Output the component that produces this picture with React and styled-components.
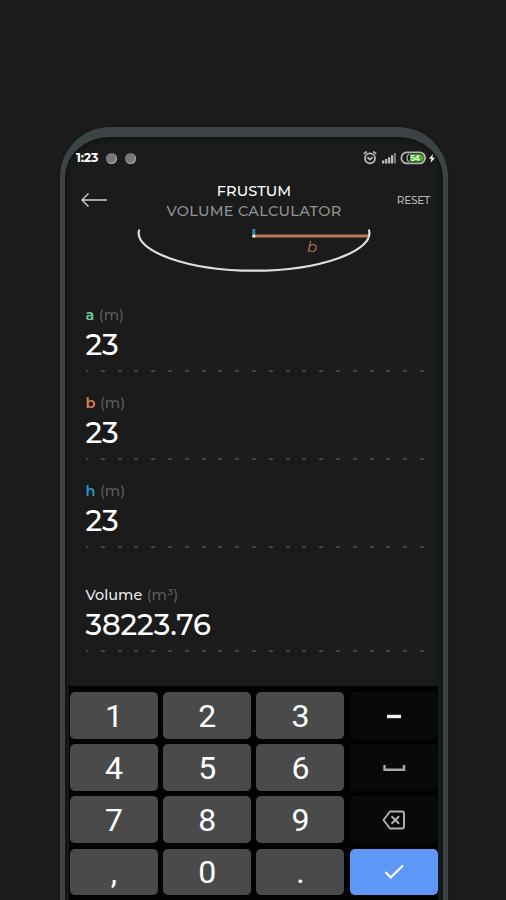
import React from "react";
import styled, { createGlobalStyle } from "styled-components";

const Global = createGlobalStyle`
  * { box-sizing: border-box; }
  html, body { margin: 0; background: #1b1b1b; }
`;
const Page = styled.main`
  width: 506px;
  height: 900px;
  overflow: hidden;
  padding: 127px 0 0 60px;
  background: #1b1b1b;
  font-family: Montserrat, Inter, sans-serif;
  color: #fff;
`;
const Phone = styled.section`
  width: 388px;
  height: 820px;
  border: solid #3b4345;
  border-width: 10px 5px 0 5px;
  border-radius: 50px 50px 0 0;
  background: #1b1b1b;
  box-shadow: inset 0 0 5px 1px #0b1012, 0 0 3px #141616;
  display: flex;
  flex-direction: column;
`;
const StatusBar = styled.div`
  height: 42px;
  padding: 0 6px 0 11px;
  display: flex;
  justify-content: space-between;
  align-items: center;
`;
const StatusGroup = styled.div`
  display: flex;
  align-items: center;
  gap: ${(p) => p.$gap}px;
`;
const Clock = styled.span`
  width: 22px;
  font-size: 12.5px;
  font-weight: 700;
  letter-spacing: -0.2px;
  line-height: 14px;
  padding-bottom: 1px;
  white-space: nowrap;
`;
const Dot = styled.i`
  width: 11px;
  height: 11px;
  border-radius: 50%;
  background: #777;
  box-shadow: inset -1px -1px 1px #a8a8a8;
`;
const Header = styled.header`
  height: 50px;
  padding: 0 13px 9px 16px;
  display: grid;
  grid-template-columns: 47px 1fr 50px;
  align-items: center;
`;
const Titles = styled.div`
  padding-top: 2px;
  text-align: center;
  font-size: 14.5px;
  line-height: 20px;
  white-space: nowrap;
`;
const Title = styled.div`
  font-weight: 500;
  letter-spacing: 0.1px;
`;
const Subtitle = styled.div`
  color: #929292;
  font-weight: 500;
  letter-spacing: 0.28px;
`;
const Reset = styled.span`
  color: #b5b5b5;
  font-size: 10.5px;
  font-weight: 500;
  letter-spacing: -0.25px;
  text-align: right;
`;
const Figure = styled.div`
  height: 48px;
  padding-left: 70px;
`;
const Gap = styled.div`
  height: ${(p) => p.$height}px;
`;
const Field = styled.div`
  height: ${(p) => p.$height || 88}px;
  padding: 0 18px 0 20.5px;
`;
const Label = styled.div`
  font-size: 14.5px;
  line-height: 22px;
  font-weight: ${(p) => p.$weight || 600};
  color: ${(p) => p.$color};
`;
const Unit = styled.span`
  font-weight: 500;
  margin-left: 0.5px;
  color: #5b5b5b;
`;
const Value = styled.div`
  height: 41px;
  font-size: 29px;
  line-height: 37px;
  font-weight: 500;
  letter-spacing: -0.1px;
`;
const Dashes = styled.div`
  height: 2px;
  margin-top: 3px;
  background: repeating-linear-gradient(90deg, #434343 0 2px, transparent 2px 14.8px, #434343 14.8px 16.8px);
`;
const Keypad = styled.div`
  width: 369px;
  height: 230px;
  margin-left: 4px;
  padding: 6px 1px 0;
  background: #020202;
  display: grid;
  grid-template-columns: repeat(4, 88px);
  grid-auto-rows: 46.5px;
  column-gap: 5.2px;
  row-gap: 5.7px;
`;
const Key = styled.button`
  border: 0;
  border-radius: 5px;
  display: flex;
  align-items: center;
  justify-content: center;
  color: #fff;
  font: 400 32px/46px Roboto, sans-serif;
  padding: 1px 0 0;
  background: ${(p) => (p.$kind === "dark" ? "#090909" : p.$kind === "blue" ? "#5e97f6" : "#4a4a4a")};
`;

const fields = [
  { name: "a", color: "#69cf93" },
  { name: "b", color: "#dc805a" },
  { name: "h", color: "#219bd0" },
];

const Minus = () => (
  <svg width="26" height="26" viewBox="0 0 26 26"><path d="M6 13.500H20" stroke="#f0f0f0" strokeWidth="3.400" /></svg>
);
const Space = () => (
  <svg width="26" height="26" viewBox="0 0 26 26"><path d="M3.500 10v4.800h19.500V10" fill="none" stroke="#a8a8a8" strokeWidth="2.400" /></svg>
);
const Delete = () => (
  <svg width="26" height="26" viewBox="0 0 26 26" fill="none" stroke="#b0b0b0" strokeWidth="2">
    <path d="M9 4.500h12q2 0 2 2v13q0 2-2 2H9L2.500 13Z" strokeLinejoin="round" />
    <path d="m10.500 9.200 7.600 7.600m0-7.600-7.600 7.600" />
  </svg>
);
const Check = () => (
  <svg width="26" height="26" viewBox="0 0 26 26"><path d="m4.500 13 5.200 5.500L22 6.500" fill="none" stroke="#fff" strokeWidth="2.200" /></svg>
);

const keys = [
  "1", "2", "3", <Minus />,
  "4", "5", "6", <Space />,
  "7", "8", "9", <Delete />,
  ",", "0", ".", <Check />,
];

export default function App() {
  return (
    <Page>
      <Global />
      <Phone>
        <StatusBar>
          <StatusGroup $gap={8}>
            <Clock>1:23</Clock>
            <Dot />
            <Dot />
          </StatusGroup>
          <StatusGroup $gap={4.5}>
            <svg width="14" height="14" viewBox="0 0 14 14" fill="none" stroke="#b8b8b8" strokeWidth="1.8">
              <circle cx="7" cy="7.300" r="5" />
              <path d="m.8 2.900 3-2.400M13.200 2.900l-3-2.400M4.400 6.300 7 8.500l2.600-2.200" />
            </svg>
            <svg width="14" height="14" viewBox="0 0 14 14">
              <path d="M0 9.500h2.300v3H0zM3 8h2.300v4.500H3zM6 6.300h2.300v6.200H6zM9 4.300h2.300v8.200H9z" fill="#bcbcbc" />
              <path d="M11.800 2H14v10.500h-2.200z" fill="#777" />
            </svg>
            <svg width="37" height="14" viewBox="0 0 37 14">
              <rect x="1.300" y="1.400" width="23.800" height="11" rx="5.500" fill="#1b1b1b" stroke="#b4b4b4" strokeWidth="1.800" />
              <path d="M10 3.200h10a3.700 3.700 0 0 1 0 7.400H10z" fill="#4bae2f" />
              <path d="M9 3a4.800 4.800 0 0 0 0 7.800" fill="none" stroke="#aaa" strokeWidth="1.400" />
              <text x="10" y="9.800" fill="#e9ffe2" fontSize="8" fontWeight="700" fontFamily="Inter" letterSpacing="-.5">54</text>
              <path d="m33 3-4 4.800h2.400l-.8 4 4.400-5.100h-2.600z" fill="#fff" />
            </svg>
          </StatusGroup>
        </StatusBar>
        <Header>
          <svg width="27" height="16" viewBox="0 0 27 16" fill="none" stroke="#d0d0d0" strokeWidth="1.400">
            <path d="M26 8H1M7.500 1.500 1 8l6.500 6.500" />
          </svg>
          <Titles>
            <Title>FRUSTUM</Title>
            <Subtitle>VOLUME CALCULATOR</Subtitle>
          </Titles>
          <Reset>RESET</Reset>
        </Header>
        <Figure>
          <svg width="240" height="48" viewBox="135 229 240 48" fill="none">
            <path d="M139.300 229.500C132 251 189 270.700 254 270.700S376 251 368.800 229.500" stroke="#dedede" strokeWidth="2.200" />
            <path d="M254 236h114" stroke="#bd765b" strokeWidth="3" />
            <path d="M253.800 229v5" stroke="#218dac" strokeWidth="3" />
            <path d="M252.300 236h3" stroke="#eee" strokeWidth="3" />
            <text x="307" y="251.500" fill="#bd765b" fontFamily="Montserrat" fontSize="15" fontStyle="italic">b</text>
          </svg>
        </Figure>
        <Gap $height={27} />
        {fields.map((f) => (
          <Field key={f.name}>
            <Label $color={f.color}>{f.name} <Unit>(m)</Unit></Label>
            <Value>23</Value>
            <Dashes />
          </Field>
        ))}
        <Gap $height={16} />
        <Field $height={102}>
          <Label $color="#e8e8e8" $weight={500}>Volume <Unit>(m³)</Unit></Label>
          <Value>38223.76</Value>
          <Dashes />
        </Field>
        <Keypad>
          {keys.map((k, i) => (
            <Key key={i} $kind={i === 15 ? "blue" : i % 4 === 3 ? "dark" : "light"}>{k}</Key>
          ))}
        </Keypad>
      </Phone>
    </Page>
  );
}
